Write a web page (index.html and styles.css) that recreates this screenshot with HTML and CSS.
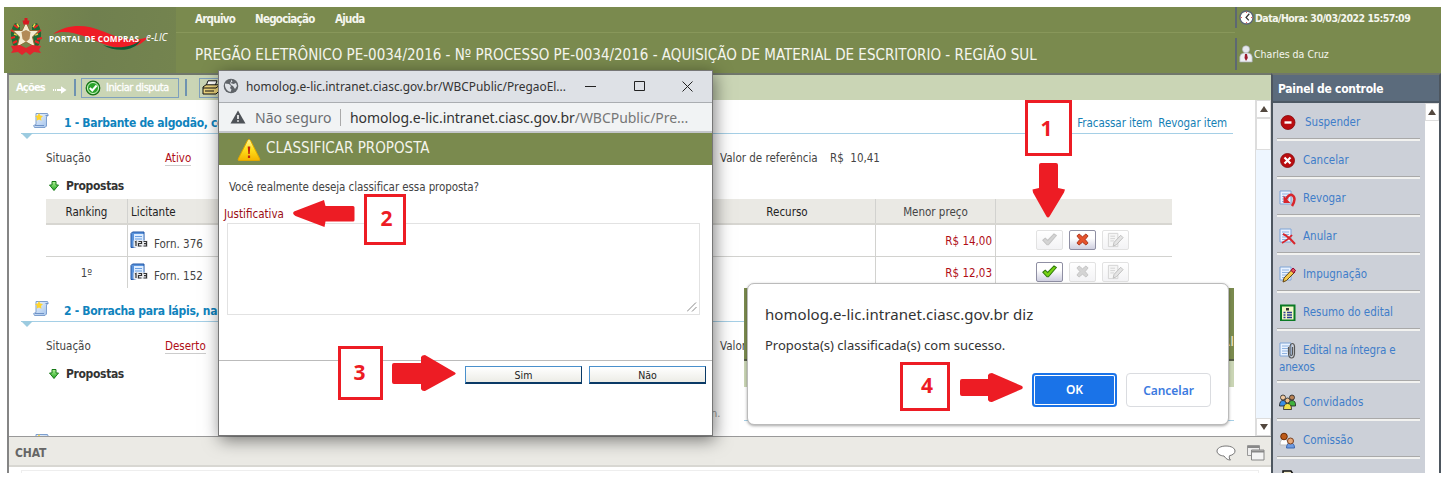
FILE: index.html
```html
<!DOCTYPE html>
<html lang="pt-BR">
<head>
<meta charset="utf-8">
<title>Portal de Compras e-LIC</title>
<link rel="stylesheet" href="styles.css">
</head>
<body>
<svg class="defs" width="0" height="0">
  <defs>
    <linearGradient id="warn" x1="0" y1="0" x2="0" y2="1"><stop offset="0" stop-color="#fff6a0"/><stop offset=".45" stop-color="#ffe11c"/><stop offset="1" stop-color="#f4b400"/></linearGradient>
    <linearGradient id="blue" x1="0" y1="0" x2="1" y2="1"><stop offset="0" stop-color="#f4f8ff"/><stop offset="1" stop-color="#9dbfe9"/></linearGradient>
    <linearGradient id="green" x1="0" y1="0" x2="0" y2="1"><stop offset="0" stop-color="#b6f59a"/><stop offset="1" stop-color="#1fa51f"/></linearGradient>
    <symbol id="scroll" viewBox="0 0 16 17"><path d="M3 1.500h11.500l.8 2-1.800 1V14L12 15.500H1.500L.6 13.500 3 12.500z" fill="url(#blue)" stroke="#7d9fce"/><path d="M12.500 3.500h2.500M2 13.500h9" stroke="#6f93c8"/><path d="M6 1l1.300 2.600L10 4 8 6l.5 2.800L6 7.500 3.500 8.800 4 6 2 4l2.700-.4z" fill="#ffd42e"/></symbol>
    <symbol id="down" viewBox="0 0 10 10"><path d="M3 .5h4v3.500h2.500L5 9.500.5 4H3z" fill="url(#green)" stroke="#177a17"/></symbol>
    <symbol id="book" viewBox="0 0 18 18"><path d="M1 2.500L2.500 1H14v13L2 16.500H1z" fill="#5b94dc" stroke="#2155a4"/><path d="M4 3h9.500v10.500H4z" fill="#dcecff"/><path d="M5 5.500h7M5 8h7" stroke="#6b9fe0"/><path d="M3.500 9.500H18V16H3.500z" fill="#e8eaee"/><path d="M5 11l1-.5V15M8.500 10.500h3v2h-3v2.500h3M13.500 10.500h3V15h-3M14 12.700h2.500" fill="none" stroke="#333" stroke-width="1.200"/></symbol>
    <symbol id="check" viewBox="0 0 14 12"><path d="M.8 6.700L3 4.800l2.300 2.100L11.200.8l2.200 1.500L6 10.900H4.700z"/></symbol>
    <symbol id="cross" viewBox="0 0 14 14"><path d="M3.200 1L7 4.100 10.800 1 13 3.200 9.900 7l3.100 3.800-2.200 2.200L7 9.900 3.200 13 1 10.800 4.100 7 1 3.200z"/></symbol>
    <symbol id="note" viewBox="0 0 18 16"><path d="M1.500 1h10v14h-10z" fill="#f5f5f5" stroke="#d3d3d3"/><path d="M3.500 4h5M3.500 6.500h5M3.500 9h4" stroke="#d3d3d3"/><path d="M14.500 3l2.500 2.500-7 7.500-3.500 1.500 1-4z" fill="#e4e4e4" stroke="#bdbdbd"/></symbol>
    <symbol id="page" viewBox="0 0 17 17"><path d="M1 1h11v13H1z" fill="#e9f2ff" stroke="#7ea4d6"/><path d="M3 4h7M3 6.500h7M3 9h7M3 11.500h5" stroke="#8fb2e0"/></symbol>
  </defs>
</svg>

<div class="app">
  <header class="top">
    <div class="brand">
      <svg class="crest" viewBox="0 0 36 38"><path d="M7 5q-7 8-2 22l7 6V7zM29 5q7 8 2 22l-7 6V7z" fill="#1e6a36"/><path d="M3 12l4 2M3 20l4-1M33 12l-4 3M34 20l-5 1M6 7l4 3M30 7l-4 3M5 25l4-2M31 25l-4-2" stroke="#e22" stroke-width="2"/><path d="M6 16l3 1M30 16l-3 1M9 6l2 3M27 6l-2 3" stroke="#e9d24a" stroke-width="1.500"/><path d="M18 4l3.800 8.500H31L24.500 19 27 29l-9-5-9 5 2.500-10L5 12.500h9.200z" fill="#f3ecd2" stroke="#8b6d35"/><path d="M13.500 14l4.500-2 4.500 2-1 7-3.500 3-3.500-3z" fill="#b28a56"/><path d="M16.500 0h3v2.500h2l-1 4h-5l-1-4h2z" fill="#d71920"/><path d="M3 28l9-1 6 3 6-3 9 1-2 4 2 3-7-1-4 3-4-3-4 3-4-3-7 1 2-3z" fill="#e1262d"/></svg>
      <div class="logo">
        <svg class="swoosh" viewBox="0 0 95 26"><path d="M0 8C16-3 34-1 49 5s28 12 46 6C84 25 65 24 48 17S15 2 0 8z" fill="#ee1c25"/><path d="M50 19c14 4 28 3 38-5-6 11-24 13-38 5z" fill="#0d5a35"/></svg>
        <span class="logo-text">PORTAL DE COMPRAS</span><span class="logo-elic">e-LIC</span>
      </div>
    </div>
    <div class="head-main">
      <nav class="menu"><span class="m1">Arquivo</span><span class="m2">Negociação</span><span class="m3">Ajuda</span></nav>
      <h1 class="process">PREGÃO ELETRÔNICO PE-0034/2016 - Nº PROCESSO PE-0034/2016 - AQUISIÇÃO DE MATERIAL DE ESCRITORIO - REGIÃO SUL</h1>
    </div>
    <div class="session">
      <div class="clock"><svg viewBox="0 0 16 16"><circle cx="8" cy="8" r="7" fill="#fff" stroke="#5b6676" stroke-width="1.500"/><path d="M11 4L7.500 8l3 3" fill="none" stroke="#333" stroke-width="1.300"/><path d="M8 2v1M8 13v1M2 8h1M13 8h1" stroke="#d22"/></svg><span>Data/Hora: 30/03/2022 15:57:09</span></div>
      <div class="user"><svg viewBox="0 0 14 18"><path d="M.8 17V12Q1 8.500 5 8h4q4 .5 4.200 4v5z" fill="#eef0f3" stroke="#a7abb3" stroke-width=".7"/><circle cx="7" cy="4.300" r="3.600" fill="#e6e9ee" stroke="#a7abb3" stroke-width=".6"/><path d="M6 9h2l.8 4L7 16l-1.500-3z" fill="#9b1b2e"/></svg><span>Charles da Cruz</span></div>
    </div>
  </header>

  <div class="body">
    <main class="main">
      <div class="toolbar">
        <span class="acoes">Ações</span>
        <svg class="go" viewBox="0 0 14 8"><path d="M0 3h1v2H0zM2 3h1v2H2zM4 3h4V.3L13.500 4 8 7.700V5H4z" fill="#fff"/></svg>
        <i class="bar"></i>
        <span class="tool"><svg viewBox="0 0 16 16"><circle cx="8" cy="8" r="6.800" fill="#29a329" stroke="#167316" stroke-width="1.200"/><circle cx="8" cy="8" r="5.500" fill="none" stroke="#d8f5d0"/><path d="M4.800 8l2.500 2.500 4.300-5" fill="none" stroke="#fff" stroke-width="2"/></svg><b>Iniciar disputa</b></span>
        <i class="bar"></i>
        <span class="tool print"><svg viewBox="0 0 18 15"><path d="M6 .8h9L13 6H4z" fill="#fff" stroke="#111"/><path d="M1 7l3-2.200h12.500L17 7v4l-3 3H1z" fill="#ecd47c" stroke="#111"/><path d="M1 8h13l3-2.500M3 11h9" stroke="#111" fill="none"/></svg></span>
      </div>
      <div class="scroller">
        <div class="items">
          <section class="item first">
            <div class="item-head"><svg class="ico"><use href="#scroll"/></svg><h2>1 - Barbante de algodão, co</h2><span class="links"><a class="fr">Fracassar item</a><a class="rv">Revogar item</a></span></div>
            <div class="facts"><span class="k">Situação</span><span class="red">Ativo</span><span class="ref">Valor de referência</span><span class="val">R$&nbsp; 10,41</span></div>
            <div class="prop"><svg><use href="#down"/></svg><b>Propostas</b></div>
            <div class="table">
              <div class="tr th"><span>Ranking</span><span class="lic">Licitante</span><span>Recurso</span><span class="mp">Menor preço</span><span></span></div>
              <div class="tr"><span></span><span class="lic"><svg class="bk"><use href="#book"/></svg><em>Forn. 376</em></span><span></span><span class="money">R$ 14,00</span>
                <span class="acts"><i class="btn off"><svg class="ck"><use href="#check"/></svg></i><i class="btn no"><svg class="cr"><use href="#cross"/></svg></i><i class="btn off"><svg class="nt"><use href="#note"/></svg></i></span></div>
              <div class="tr"><span>1º</span><span class="lic"><svg class="bk"><use href="#book"/></svg><em>Forn. 152</em></span><span></span><span class="money">R$ 12,03</span>
                <span class="acts"><i class="btn yes"><svg class="ck"><use href="#check"/></svg></i><i class="btn off"><svg class="cr"><use href="#cross"/></svg></i><i class="btn off"><svg class="nt"><use href="#note"/></svg></i></span></div>
            </div>
          </section>
          <section class="item second">
            <div class="item-head"><svg class="ico"><use href="#scroll"/></svg><h2>2 - Borracha para lápis, na</h2></div>
            <div class="facts"><span class="k">Situação</span><span class="red">Deserto</span><span class="ref">Valor</span></div>
            <div class="prop"><svg><use href="#down"/></svg><b>Propostas</b></div>
            <div class="hint">n.</div>
          </section>
          <section class="item">
            <div class="item-head"><svg class="ico"><use href="#scroll"/></svg></div>
          </section>
        </div>
        <div class="scrollbar"><i class="up"></i><i class="thumb"></i><i class="dn"></i></div>
      </div>
      <div class="chat"><b>CHAT</b>
        <svg class="bubble" viewBox="0 0 20 16"><path d="M10 1C4.500 1 1 3.300 1 6s3 4.800 7 5c2 3 4 4 6.500 4-1.300-1.300-1.500-2.500-1-4.300C17 10 19 8.300 19 6c0-2.700-3.500-5-9-5z" fill="#fff" stroke="#777"/></svg>
        <svg class="wins" viewBox="0 0 18 16"><path d="M.5.5h12v10H.5z" fill="#eee" stroke="#999"/><path d="M.5 2h12" stroke="#888" stroke-width="2"/><path d="M4.500 5h12.500v10H4.500z" fill="#f4f4f4" stroke="#888"/><path d="M4.500 6.500H17" stroke="#888" stroke-width="2"/></svg>
      </div>
      <div class="chat-body"><i></i></div>
    </main>

    <aside class="side">
      <h3>Painel de controle</h3>
      <div class="side-body">
        <ul>
          <li class="s1"><svg viewBox="0 0 17 17"><circle cx="9" cy="8.500" r="7" fill="#b90d10" stroke="#850609" stroke-width=".8"/><path d="M5.500 7.300h7v2.400h-7z" fill="#fff"/></svg><span>Suspender</span></li>
          <li><svg viewBox="0 0 17 17"><circle cx="8.500" cy="8.500" r="7" fill="#b90d10" stroke="#850609" stroke-width=".8"/><path d="M5.500 5.500l6 6M11.500 5.500l-6 6" stroke="#fff" stroke-width="2.200"/></svg><span>Cancelar</span></li>
          <li><svg viewBox="0 0 17 17"><use href="#page" width="17" height="17"/><path d="M7 9q3-5 6-4 5 3 0 11" fill="none" stroke="#d8262c" stroke-width="2.500"/><path d="M4.500 5.500v7.500h7z" fill="#d8262c"/></svg><span>Revogar</span></li>
          <li><svg viewBox="0 0 17 17"><use href="#page" width="17" height="17"/><path d="M3 15q6-3 10-8M4 6q5 2 12 10" fill="none" stroke="#d8262c" stroke-width="1.900"/></svg><span>Anular</span></li>
          <li><svg viewBox="0 0 17 17"><use href="#page" width="17" height="17"/><path d="M4 16l1-4 8-8.500 3 2.500-8.500 8.500z" fill="#f4c84a" stroke="#614313"/><path d="M12 4.500l2-2.500 2.500 2.300L14.800 7z" fill="#e35b5b" stroke="#903"/></svg><span>Impugnação</span></li>
          <li><svg viewBox="0 0 17 17"><path d="M2 1.500h13.500v15H2z" fill="#f4f8c8" stroke="#0b7a24" stroke-width="2"/><path d="M7 4h3v2.500H7z" fill="#333"/><path d="M4.500 8.500h2M8 8.500h5M4.500 11h2M8 11h5M4.500 13.500h2M8 13.500h5" stroke="#2d3b94" stroke-width="1.300"/></svg><span>Resumo do edital</span></li>
          <li class="two"><svg viewBox="0 0 17 17"><use href="#page" width="17" height="17"/><path d="M9.500 5v7q.5 4 3 4t3-4V4q-.5-2.500-2.200-2.500T11 4v8q.3 1.500 1.300 1.500T13.500 12V5" fill="none" stroke="#555" stroke-width="1.200"/></svg><span>Edital na íntegra e anexos</span></li>
          <li><svg viewBox="0 0 17 17"><g stroke="#222" stroke-width=".8"><circle cx="4" cy="3.500" r="2.500" fill="#f0c9a0"/><circle cx="13" cy="3.500" r="2.500" fill="#b98255"/><path d="M.5 12q0-5.500 3.500-5.500T8 12z" fill="#3b8fe6"/><path d="M9 12q0-5.500 4-5.500t3.500 5.500z" fill="#3fb23f"/><circle cx="8.500" cy="6.500" r="2.500" fill="#efc08a"/><path d="M4.500 15.500q0-6 4-6t4 6z" fill="#f1e04a"/></g></svg><span>Convidados</span></li>
          <li><svg viewBox="0 0 17 17"><path d="M1 13q0-6 4-6t4 6z" fill="#fff" stroke="#bbb"/><circle cx="5" cy="4.500" r="3.300" fill="#bd5a18" stroke="#6b2b04"/><path d="M7.500 16q0-5 4-5t4 5z" fill="#6e9be2" stroke="#3b66ae"/><circle cx="11.500" cy="9" r="3" fill="#e6a878" stroke="#7a4020"/></svg><span>Comissão</span></li>
          <li><svg viewBox="0 0 17 17"><path d="M4 1h8l2 3v12H4z" fill="#f6f0cf" stroke="#111" stroke-width="1.500"/></svg></li>
        </ul>
        <div class="side-scroll"><i class="up"></i></div>
      </div>
    </aside>
  </div>
</div>

<div class="ghost"><div class="g1"><span>RI</span></div><div class="g2"></div></div>

<div class="popup">
  <div class="p-title"><svg viewBox="0 0 16 16"><circle cx="8" cy="8" r="7.300" fill="#5f6368"/><path d="M2 5.500l4 .5 2 2-1 2 1.500 1.500-1 2.500Q3 13 2 8zM8 1.500l1.500 2-2 1.500 3 1 2.500-1 1 3-2 3-2-3-2-1-1-2 1-1.500z" fill="#dee1e6"/></svg><span>homolog.e-lic.intranet.ciasc.gov.br/WBCPublic/PregaoEl...</span>
    <svg class="winbtn" viewBox="0 0 110 14"><path d="M0 7.500h11M49.500 2.500h10v9h-10zM97.500 2.500l10 10M107.500 2.500l-10 10" fill="none" stroke="#222"/></svg></div>
  <div class="p-addr"><svg viewBox="0 0 16 14"><path d="M8 .5L15.500 13.500H.5z" fill="#4f5358"/><path d="M7.200 5h1.600v4H7.200zM7.200 10.200h1.600v1.600H7.200z" fill="#fff"/></svg><span class="nao">Não seguro</span><i></i><span class="url">homolog.e-lic.intranet.ciasc.gov.br<em>/WBCPublic/Pre...</em></span></div>
  <div class="p-head"><svg viewBox="0 0 24 24"><path d="M12 1.500q1 0 1.500 1L22.800 21q.5 1.500-1 1.500H2.200q-1.500 0-1-1.500l9.300-18.500q.5-1 1.500-1z" fill="url(#warn)" stroke="#e0a800"/><path d="M10.700 8.500h2.600l-.6 7.500h-1.400zM10.900 17.500h2.200v2.500h-2.200z" fill="#c4260a"/></svg><span>CLASSIFICAR PROPOSTA</span></div>
  <div class="p-body">
    <p class="q">Você realmente deseja classificar essa proposta?</p>
    <label>Justificativa</label>
    <div class="area"><svg viewBox="0 0 10 10"><path d="M0 9.500L9 .5M5 9.500l4.500-4.500" stroke="#888"/></svg></div>
  </div>
  <div class="p-foot"><span class="pb">Sim</span><span class="pb">Não</span></div>
</div>

<div class="alert">
  <div class="a-title">homolog.e-lic.intranet.ciasc.gov.br diz</div>
  <div class="a-msg">Proposta(s) classificada(s) com sucesso.</div>
  <div class="a-btns"><span class="ok">OK</span><span class="cancel">Cancelar</span></div>
</div>

<div class="mark k1">1</div><div class="mark k2">2</div><div class="mark k3">3</div><div class="mark k4">4</div>
<svg class="arrows" viewBox="0 0 1449 480"><g fill="#ed1c24">
  <path d="M1041 163h15q2 0 2 2v23l7 1.500-1 3-14.500 24q-1.500 2-3 0L1033 192.500l-.500-3 6.500-1.500v-23q0-2 2-2z"/>
  <path d="M293 213l1-1.500 30-11.500 1.500 6H353q1.500 0 1.500 1.500v12.500q0 1.500-1.500 1.500h-27.500l-1 5.500-29-11q-2-1-2.500-3z"/>
  <path d="M392 365q0-2 2-2h27v-6q1-2 4-2l30 17.500q1.500 1 0 2L425 391q-3 .5-4-2v-5h-27q-2 0-2-2z"/>
  <path d="M960 381q0-2 2-2h26v-4q1-2 4-2l30 13q1.500 1.500 0 3L992 402q-3 .5-4-2v-4h-26q-2 0-2-2z"/>
</g></svg>
</body>
</html>
```
FILE: styles.css
```css
* { box-sizing: border-box; margin: 0; padding: 0; }
body { width: 1449px; height: 480px; overflow: hidden; position: relative; background: #fff; font-family: "DejaVu Sans Condensed", "DejaVu Sans", sans-serif; font-stretch: condensed; font-size: 11.5px; color: #444; padding: 7px 0 0 4px; white-space: nowrap; }
i, em { font-style: normal; }
.defs { position: absolute; }
svg { flex: none; display: block; }
.app { width: 1437px; height: 466px; overflow: hidden; display: flex; flex-direction: column; }

.top { height: 66px; background: #7a8a4e; display: flex; flex: none; color: #f5f6ee; }
.brand { width: 172px; display: flex; background: linear-gradient(100deg, #7a8a4e, #70804f 50%, #74844f); padding-left: 4px; }
.crest { width: 36px; height: 38px; margin-top: 11px; }
.logo { position: relative; width: 125px; height: 40px; margin: 16px 0 0 4px; }
.swoosh { position: absolute; left: 5px; top: 3px; width: 95px; height: 26px; }
.logo-text { position: absolute; left: 1px; top: 9px; font: bold 8.200px/13px "Open Sans", sans-serif; color: #fff; letter-spacing: .18px; }
.logo-elic { position: absolute; left: 98px; top: 7px; font: italic 10px/14px "Open Sans", sans-serif; color: #fff; }
.head-main { width: 1059px; }
.menu { display: flex; height: 26px; padding: 0 0 2px 19px; border-bottom: 1px solid #88975a; align-items: center; font-weight: bold; font-size: 11.500px; gap: 20px; letter-spacing: -.75px; }
.m1 { width: 40px; } .m2 { width: 60px; }
.process { font-size: 15px; font-weight: normal; line-height: 24px; padding: 10px 0 0 19px; }
.session { display: flex; flex-direction: column; gap: 10px; }
.session div { display: flex; align-items: center; border-left: 2px solid #5d6872; padding-left: 2px; font-size: 10.500px; }
.clock { height: 21px; gap: 1px; }
.clock svg { width: 15px; height: 15px; }
.clock span { font-weight: bold; letter-spacing: -.52px; }
.user { height: 32px; gap: 1px; }
.user svg { width: 14px; height: 18px; }

.body { display: flex; flex: 1; min-height: 0; padding-left: 3px; }
.main { width: 1264px; display: flex; flex-direction: column; border-left: 2px solid #858585; border-top: 2px solid #70776b; }
.toolbar { height: 25px; flex: none; background: #cad5b5; display: flex; align-items: center; color: #fff; padding-left: 7px; }
.acoes { width: 37px; font-weight: bold; font-size: 11px; letter-spacing: -.8px; }
.go { width: 14px; height: 8px; margin-top: 5px; }
.bar { width: 2px; height: 17px; margin: 0 5px 0 7px; background: #6f93b0; }
.tool { width: 98px; height: 20px; display: flex; align-items: center; border: 1px solid #7fa0bd; padding-left: 3px; gap: 5px; }
.tool svg { width: 16px; height: 16px; }
.tool b { font-size: 10.800px; font-weight: normal; letter-spacing: -.4px; -webkit-text-stroke: .3px #fff; }
.tool + .bar { margin: 0 12px 0 6px; }
.print { width: 40px; padding-left: 2px; }
.print svg { width: 18px; height: 15px; }

.scroller { height: 336px; flex: none; display: flex; overflow: hidden; }
.items { flex: 1; min-width: 0; padding-left: 12px; }
.item.first { height: 188px; }
.item.second { height: 133px; }
.item-head { display: flex; height: 34px; width: 1212px; border-bottom: 1px solid #a5cfe6; position: relative; padding: 12px 0 0 12px; }
.item-head::after { content: ""; position: absolute; left: 0; top: 33px; border: 6px solid transparent; border-top-color: #9ccbe0; border-bottom: 0; }
.ico { width: 16px; height: 17px; }
.item-head h2 { margin: 3px 0 0 15px; font-size: 12px; line-height: 17px; color: #0f83bd; letter-spacing: -.3px; }
.links { margin: 4px 6px 0 auto; display: flex; gap: 6px; color: #1580b5; font-size: 11.500px; line-height: 15px; letter-spacing: -.05px; }
.facts { display: flex; padding: 17px 0 0 25px; line-height: 15px; }
.k { width: 119px; }
.red { color: #b00d16; border-bottom: 1px solid #ccc; height: 15px; }
.ref { position: absolute; left: 720px; }
.val { position: absolute; left: 830px; }
.prop { display: flex; align-items: center; gap: 7px; padding: 12px 0 0 28px; height: 27px; }
.prop svg { width: 10px; height: 10px; }
.prop b { font-size: 12px; letter-spacing: -.35px; color: #333; }
.table { margin: 6px 0 0 25px; width: 1126px; height: 89px; overflow: hidden; }
.tr { display: grid; grid-template-columns: 82px 571px 177px 120px 176px; height: 32px; border-bottom: 1px solid #d2d2cf; }
.tr > span { display: flex; align-items: center; justify-content: center; border-right: 1px solid #d2d2cf; }
.tr > span:last-child { border: 0; }
.tr .lic { justify-content: flex-start; padding-left: 3px; }
.th { height: 26px; background: #eae9e4; border-bottom: 2px solid #d7d6d1; color: #222; }
.th > span { padding-top: 2px; }
.tr .mp { color: #444; }
.bk { width: 18px; height: 18px; margin: -2px 6px 0 -1px; }
.lic em { padding-top: 7px; }
.tr .money { justify-content: flex-end; color: #b00d16; padding-right: 3px; }
.tr .acts { justify-content: flex-start; gap: 6px; padding: 0 0 2px 40px; }
.btn { width: 27px; height: 20px; border: 1px solid #e2e2e2; border-radius: 2px; display: flex; align-items: center; justify-content: center; background: linear-gradient(#fff, #f3f3f5); }
.yes, .no { border-color: #8f8fa3; background: linear-gradient(#fff 40%, #cfcfe0); }
.ck { width: 15px; height: 13px; } .cr { width: 13px; height: 13px; } .nt { width: 17px; height: 16px; }
.off { fill: #d4d4d4; stroke: #c4c4c4; }
.yes { fill: #77d312; stroke: #2f7a0a; } .no { fill: #e5522c; stroke: #a8341c; }
.hint { padding: 26px 0 0 690px; color: #999; font-size: 11px; }
.scrollbar { width: 16px; background: #eef6ff; border-left: 1px solid #ddd; display: flex; flex-direction: column; }
.up, .dn, .thumb { display: flex; background: #fff; border: 1px solid #ddd; height: 18px; align-items: center; justify-content: center; }
.thumb { height: 32px; }
.dn { margin-top: auto; }
.up::after, .dn::after { content: ""; border: 4px solid transparent; border-bottom: 6px solid #53483f; border-top: 0; }
.dn::after { transform: rotate(180deg); }
.chat { height: 31px; flex: none; background: #ebeae5; border-top: 1px solid #999; border-bottom: 2px solid #d8d7d2; display: flex; align-items: center; padding: 3px 6px 0 6px; color: #666; }
.chat b { font-size: 12px; letter-spacing: -.1px; }
.bubble { width: 20px; height: 16px; margin-left: auto; }
.wins { width: 18px; height: 16px; margin-left: 11px; }
.chat-body { padding: 3px 12px; background: #fff; }
.chat-body i { display: block; height: 8px; border: 1px solid #eee; }

.side { width: 170px; border: 2px solid #4d565f; border-bottom: 0; border-top-color: #70776b; display: flex; flex-direction: column; }
.side h3 { height: 28px; flex: none; background: #5b6b7c; border-bottom: 2px solid #4c5864; color: #fff; font-size: 12px; line-height: 29px; padding-left: 5px; letter-spacing: -.28px; }
.side-body { flex: 1; display: flex; background: #ccd0d8; min-height: 0; overflow: hidden; }
.side ul { list-style: none; width: 152px; padding-left: 4px; flex: none; }
.side li { height: 38px; width: 143px; border-bottom: 2px solid #f2f2f0; box-shadow: inset 0 -1px #a9a9a9; display: flex; padding: 10px 0 0 2px; gap: 7px; color: #3f7dc9; font-size: 11.500px; line-height: 17px; }
.side li svg { width: 17px; height: 17px; margin-top: 1px; }
.side li.s1 { gap: 9px; }
.side li span { margin-top: 1px; }
.side li.two { height: 52px; display: block; white-space: normal; }
.side li.two svg { float: left; margin-right: 7px; }
.side li.two span { display: block; letter-spacing: -.15px; }
.side-scroll { flex: 1; background: #fff; }

.ghost { position: absolute; left: 744px; top: 288px; width: 490px; height: 133px; background: #fff; border-bottom: 1px solid #a5cfe6; }
.g1 { height: 73px; background: #7a8a4e; border-bottom: 2px solid #555d48; color: #f3e6c8; font-size: 14px; display: flex; justify-content: flex-end; padding-top: 42px; line-height: 22px; }
.g2 { height: 26px; background: #cad5b5; }

.popup { position: absolute; left: 218px; top: 70px; width: 495px; height: 366px; background: #fff; border: 1px solid #777; box-shadow: 2px 4px 16px rgba(0,0,0,.5); display: flex; flex-direction: column; }
.p-title { height: 32px; background: #dee1e6; border-bottom: 1px solid #aaadb1; display: flex; align-items: center; padding: 0 17px 2px 4px; color: #333; font: 11.900px "Noto Sans", sans-serif; gap: 7px; }
.p-title > svg:first-child { width: 16px; height: 16px; }
.p-title .winbtn { width: 110px; height: 14px; margin-left: auto; }
.p-addr { height: 30px; background: #f1f3f4; border-bottom: 2px solid #c3c6ca; display: flex; align-items: center; padding-left: 11px; font: 14px "Noto Sans", sans-serif; color: #333; }
.p-addr > svg { width: 16px; height: 14px; }
.nao { margin-left: 9px; color: #6b6e72; width: 76px; }
.p-addr i { width: 1px; height: 17px; background: #aaa; margin: 0 9px; }
.url { letter-spacing: -.04px; }
.url em { color: #777; }
.p-head { height: 32px; background: #7a8a4e; display: flex; align-items: center; padding-left: 18px; gap: 5px; color: #f3f4ec; font-size: 15px; }
.p-head svg { width: 24px; height: 24px; margin-top: 2px; }
.p-head span { padding-bottom: 2px; }
.p-body { height: 195px; padding: 15px 12px 0 5px; line-height: 15px; }
.q { padding-left: 5px; letter-spacing: -.08px; }
.p-body label { display: block; margin-top: 12px; color: #9c0d14; }
.area { margin: 1px 0 0 3px; height: 92px; border: 1px solid #e2e2e2; display: flex; align-items: flex-end; justify-content: flex-end; padding: 2px; }
.area svg { width: 10px; height: 10px; }
.p-foot { border-top: 1px solid #bbb; display: flex; justify-content: flex-end; gap: 7px; padding: 5px 6px; color: #222; font-size: 10.500px; }
.pb { width: 117px; height: 18px; border: 1px solid #4a90cc; border-right-color: #0a3a66; border-bottom: 2px solid #0a3a66; text-align: center; line-height: 17px; background: linear-gradient(#fff, #ecece6); }

.alert { position: absolute; left: 747px; top: 283px; width: 482px; height: 142px; border: 1px solid #bbb; border-radius: 7px; background: #fff; box-shadow: 0 1px 3px rgba(0,0,0,.35); font-family: "Noto Sans", sans-serif; padding: 19px 17px 0; color: #333; }
.a-title { font-size: 15px; line-height: 22px; letter-spacing: .05px; }
.a-msg { font-size: 13px; line-height: 18px; margin-top: 11px; }
.a-btns { display: flex; justify-content: flex-end; gap: 9px; margin-top: 19px; }
.a-btns span { width: 85px; height: 34px; border-radius: 4px; text-align: center; font-size: 12px; font-weight: 600; line-height: 34px; }
.ok { background: #1a73e8; color: #fff; box-shadow: inset 0 0 0 2px #1a73e8, inset 0 0 0 3px #fff; }
.cancel { border: 1px solid #dadce0; color: #3b7ae0; letter-spacing: -.05px; }

.mark { position: absolute; border: 3px solid #ed1c24; background: #fff; color: #ed1c24; font: bold 21px "Open Sans", sans-serif; display: flex; align-items: center; justify-content: center; }
.k1 { left: 1025px; top: 100px; width: 47px; height: 56px; padding-right: 4px; }
.k2 { left: 364px; top: 194px; width: 42px; height: 51px; padding: 0 0 4px 3px; }
.k3 { left: 338px; top: 346px; width: 45px; height: 54px; padding: 0 2px 3px 0; }
.k4 { left: 900px; top: 362px; width: 50px; height: 49px; padding: 0 0 3px 4px; }
.arrows { position: absolute; left: 0; top: 0; width: 1449px; height: 480px; }
```
